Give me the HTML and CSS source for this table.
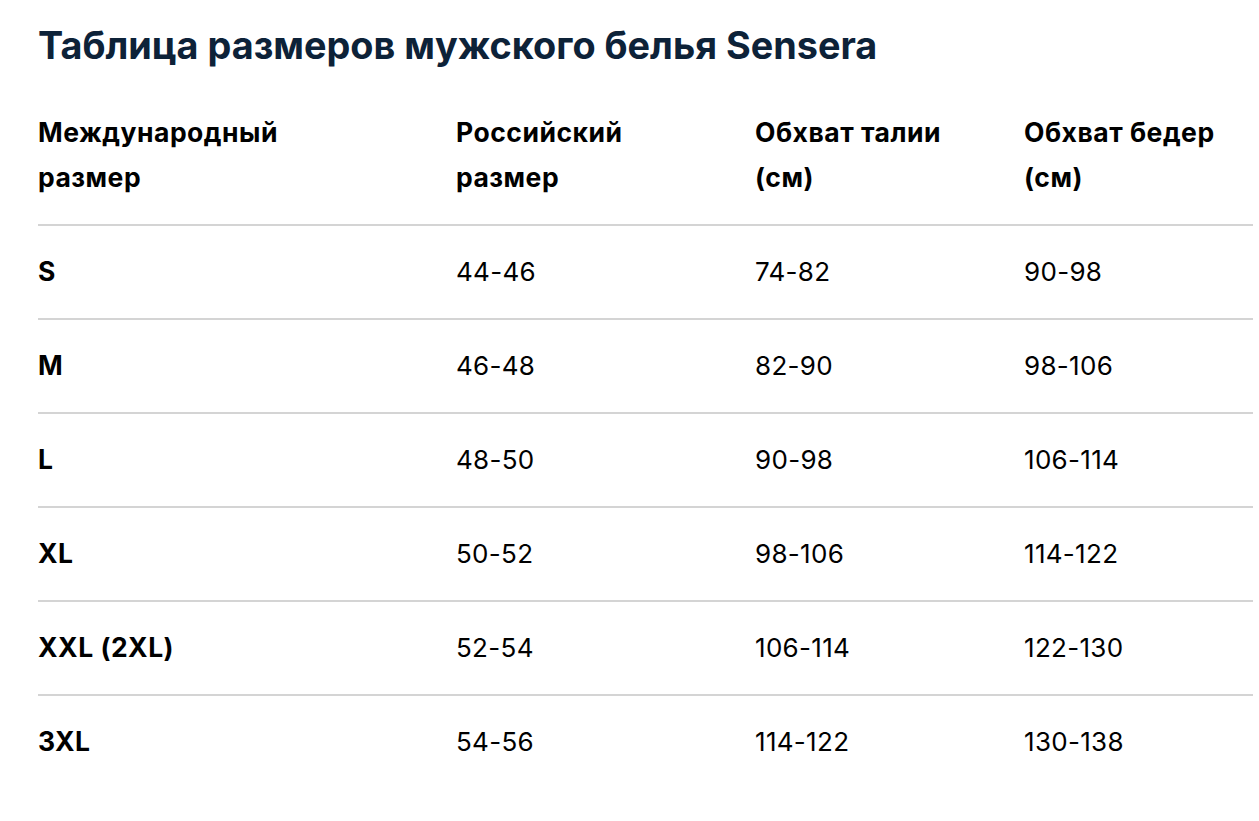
FILE: index.html
```html
<!DOCTYPE html>
<html lang="ru">
<head>
<meta charset="utf-8">
<title>Таблица размеров</title>
<link rel="stylesheet" href="styles.css">
</head>
<body>
<main class="page">
  <h1 class="title">Таблица размеров мужского белья Sensera</h1>
  <table class="sizes">
    <colgroup>
      <col class="c1"><col class="c2"><col class="c3"><col class="c4">
    </colgroup>
    <thead>
      <tr>
        <th>Международный<br>размер</th>
        <th>Российский<br>размер</th>
        <th>Обхват талии<br>(см)</th>
        <th>Обхват бедер<br>(см)</th>
      </tr>
    </thead>
    <tbody>
      <tr><th>S</th><td>44-46</td><td>74-82</td><td>90-98</td></tr>
      <tr><th>M</th><td>46-48</td><td>82-90</td><td>98-106</td></tr>
      <tr><th>L</th><td>48-50</td><td>90-98</td><td>106-114</td></tr>
      <tr><th>XL</th><td>50-52</td><td>98-106</td><td>114-122</td></tr>
      <tr><th>XXL (2XL)</th><td>52-54</td><td>106-114</td><td>122-130</td></tr>
      <tr><th>3XL</th><td>54-56</td><td>114-122</td><td>130-138</td></tr>
    </tbody>
  </table>
</main>
</body>
</html>
```

FILE: styles.css
```css
html, body {
  margin: 0;
  padding: 0;
  background: #ffffff;
}

body {
  font-family: Inter, "Open Sans", sans-serif;
  color: #111111;
}

.page {
  padding: 20px 0 0 38px;
  width: 1215px;
}

.title {
  margin: 0;
  font-size: 37.8px;
  line-height: 50px;
  font-weight: 700;
  color: #0d2238;
}

.sizes {
  margin-top: 17px;
  width: 1215px;
  border-collapse: collapse;
  table-layout: fixed;
}

.c1 { width: 418px; }
.c2 { width: 299px; }
.c3 { width: 269px; }
.c4 { width: 229px; }

.sizes th,
.sizes td {
  padding: 23px 0 24px 0;
  text-align: left;
  vertical-align: middle;
  line-height: 45px;
  border-bottom: 2px solid #d4d4d4;
}

.sizes th {
  font-size: 26.5px;
  font-weight: 700;
  letter-spacing: 0.5px;
  color: #000000;
}

.sizes td {
  font-size: 26px;
  font-weight: 400;
  letter-spacing: 0.3px;
  color: #000000;
}

.sizes tbody tr:last-child th,
.sizes tbody tr:last-child td {
  border-bottom: none;
}
```
